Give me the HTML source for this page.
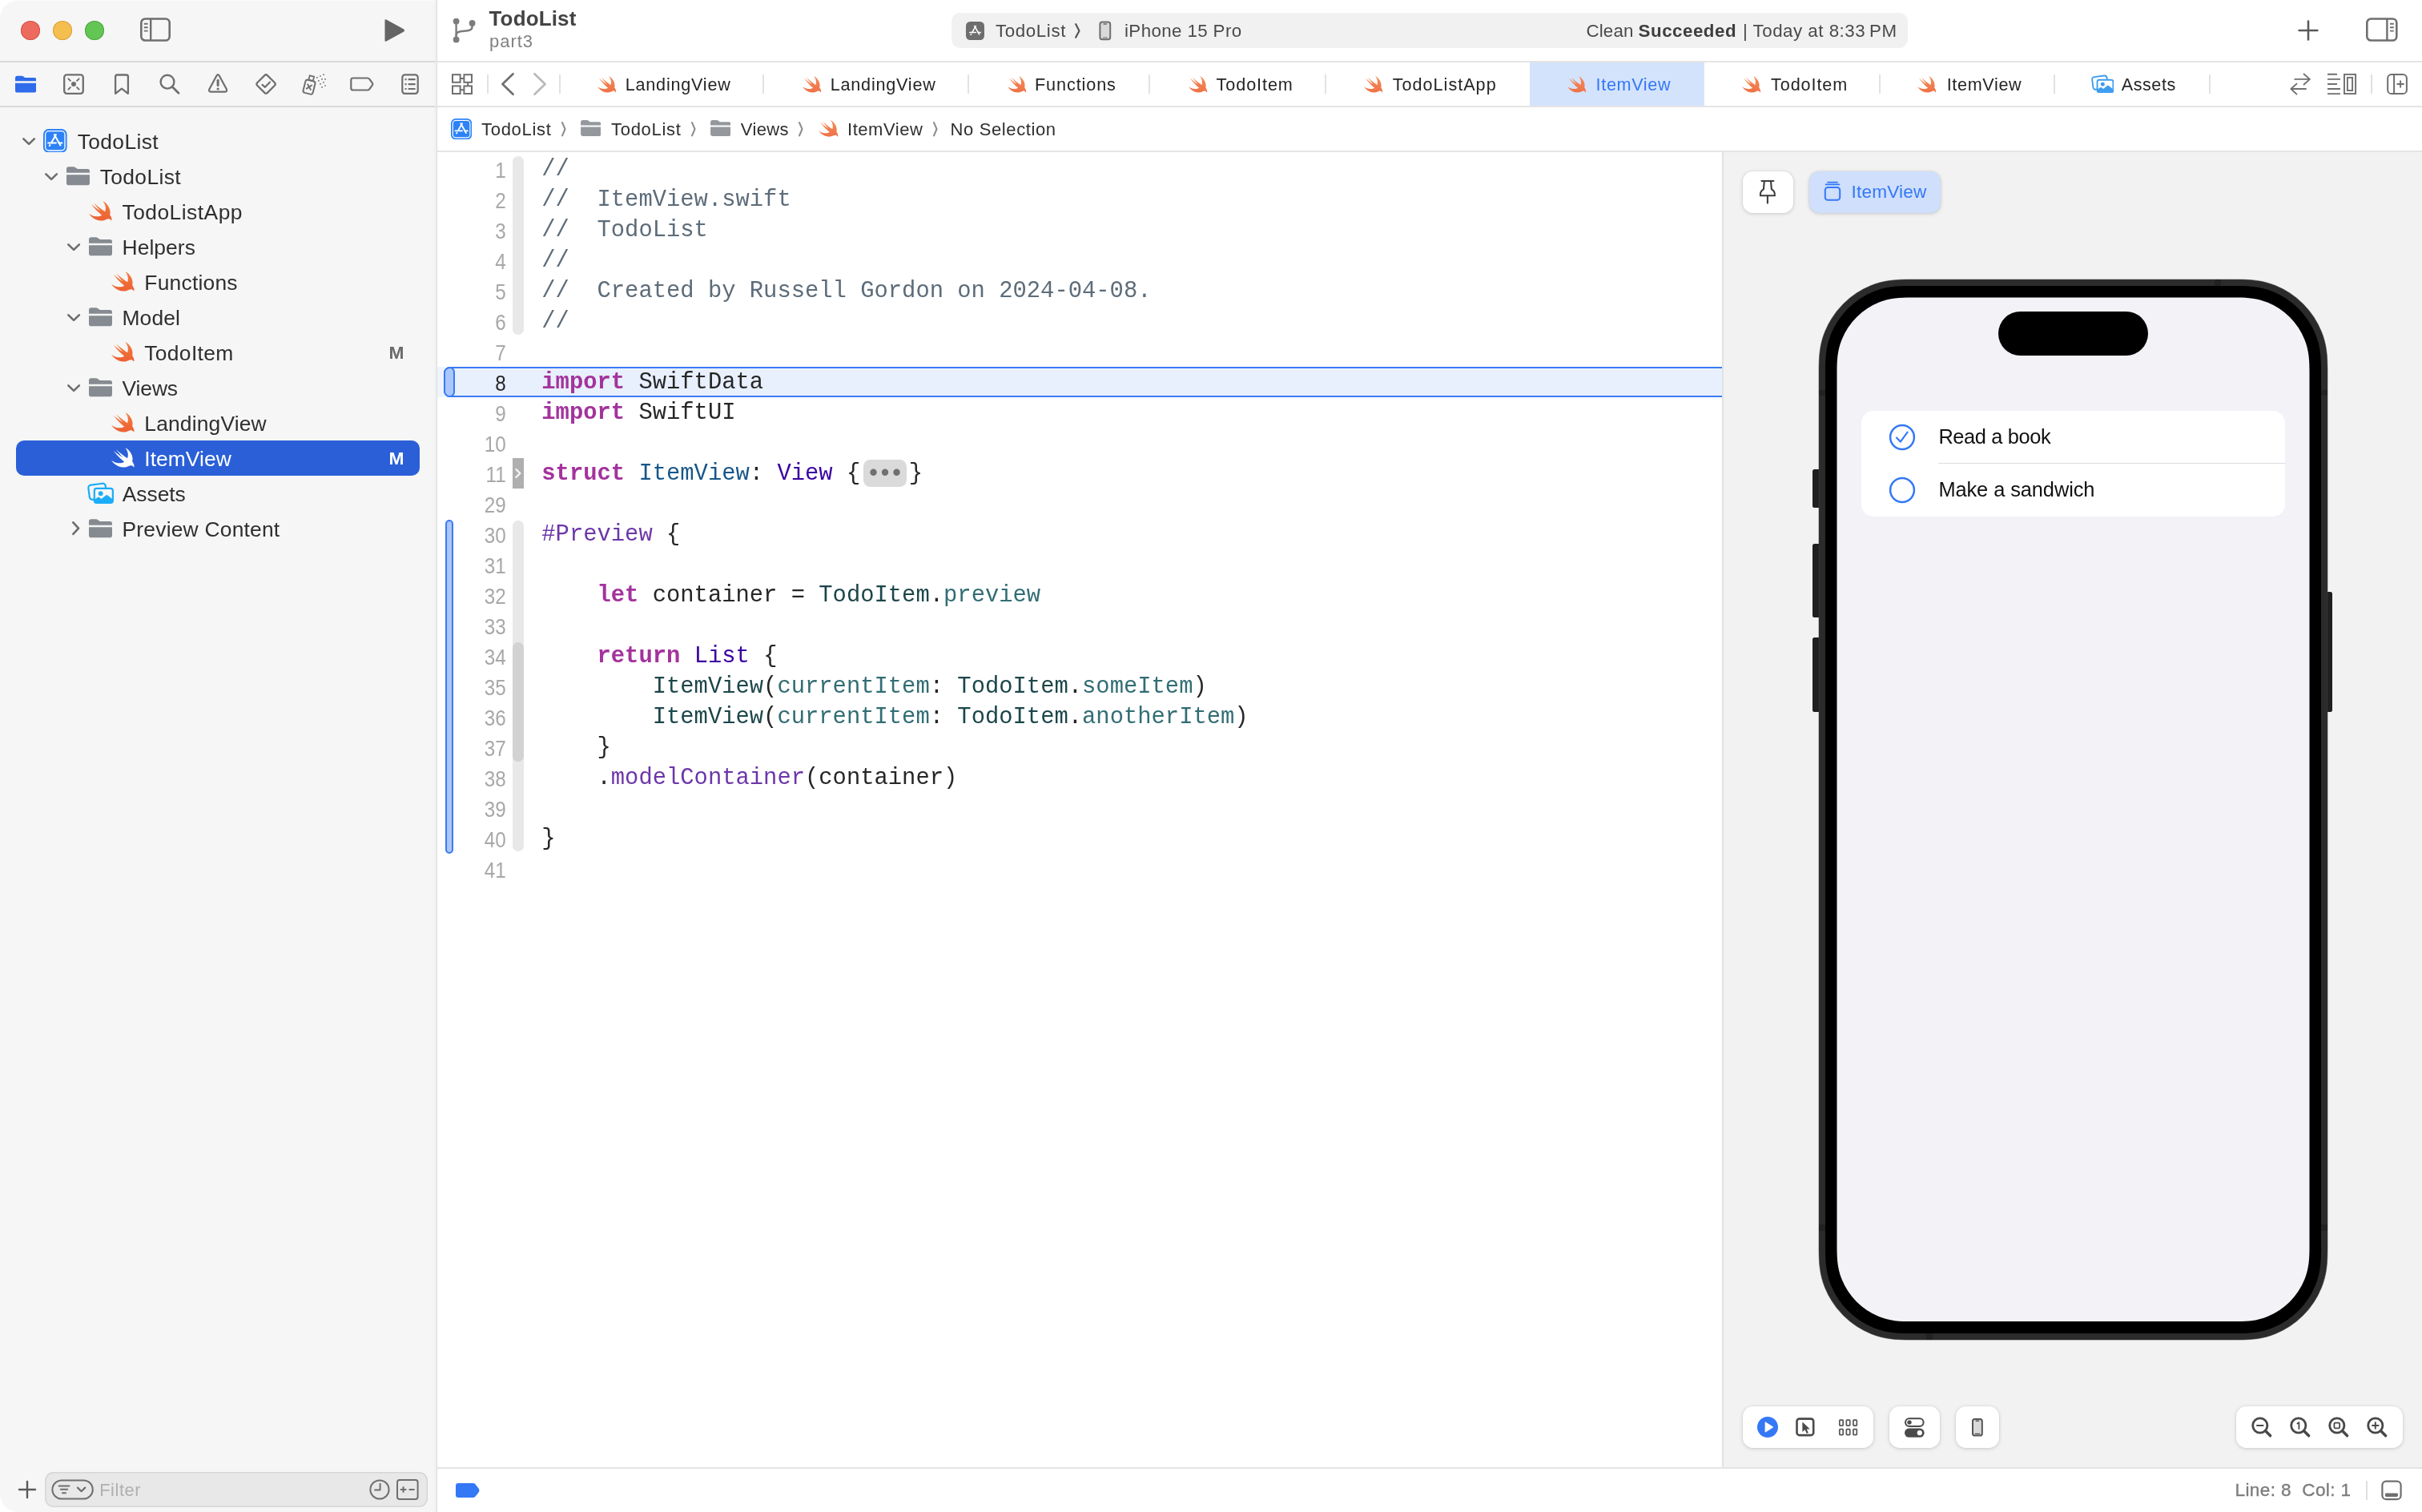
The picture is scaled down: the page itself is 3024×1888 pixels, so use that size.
<!DOCTYPE html>
<html lang="en"><head><meta charset="utf-8"><title>TodoList — ItemView.swift</title>
<style>
html,body{margin:0;padding:0;background:#fff;}
body{width:3024px;height:1888px;position:relative;overflow:hidden;font-family:"Liberation Sans",sans-serif;color:#262626;}
.t{position:absolute;white-space:pre;}
.b{position:absolute;}
svg{display:block;}
.code{position:absolute;left:676.3px;white-space:pre;font-family:"Liberation Mono",monospace;font-size:28.83px;height:38px;line-height:38px;color:#262626;}
.ln{margin-top:-0.5px;position:absolute;white-space:pre;font-size:26.8px;height:38px;line-height:38px;color:#a8a8a8;width:91.8px;left:540px;text-align:right;transform:scaleX(0.905);transform-origin:right center;}
.dots{display:inline-block;vertical-align:top;width:53.6px;height:34px;line-height:36px;margin:0.5px 3px 0 4px;background:#dadada;border-radius:8.5px;color:#707070;font-size:31px;letter-spacing:-4.2px;text-align:center;text-indent:-4.2px;font-family:"Liberation Mono",monospace;overflow:hidden;}
.k{color:#a3339c;font-weight:bold;}
.c{color:#5d6c79;}
.td{color:#17568a;}
.ty{color:#3900a0;}
.pt{color:#1c464a;}
.pp{color:#326d74;}
.fn{color:#6c36a9;}
</style></head><body>
<div id="root" style="position:absolute;left:0;top:0;width:3024px;height:1888px;will-change:transform;">

<div class="b" style="left:0px;top:0px;width:545px;height:1888px;background:#f6f6f6;border-radius:23px 0 0 23px;box-shadow:inset 0 1px 0 #fbfbfb;"></div>
<div class="b" style="left:541px;top:0px;width:4px;height:1888px;background:linear-gradient(90deg,rgba(0,0,0,0),rgba(0,0,0,0.035));"></div>
<div class="b" style="left:545px;top:0px;width:1px;height:1888px;background:#dedede;"></div>
<div class="b" style="left:0px;top:76px;width:544px;height:2px;background:#d9d9d9;"></div>
<div class="b" style="left:0px;top:132px;width:544px;height:2px;background:#d9d9d9;"></div>
<div class="b" style="left:26px;top:26px;width:24px;height:24px;background:#ed6a5f;border-radius:50%;box-shadow:inset 0 0 0 1px #d5544a;"></div>
<div class="b" style="left:66px;top:26px;width:24px;height:24px;background:#f5bf4f;border-radius:50%;box-shadow:inset 0 0 0 1px #d8a03a;"></div>
<div class="b" style="left:106px;top:26px;width:24px;height:24px;background:#62c554;border-radius:50%;box-shadow:inset 0 0 0 1px #4fa73f;"></div>
<svg style="position:absolute;left:174px;top:21px;" width="40" height="32" viewBox="0 0 40 32"><rect x="2.3" y="2.5" width="35.4" height="27" rx="5" fill="none" stroke="#6f6f6f" stroke-width="2.6"/><path d="M14.2 2.5V29.5" stroke="#6f6f6f" stroke-width="2.4"/><path d="M5.8 8.8H10.6M5.8 13.2H10.6M5.8 17.6H10.6" stroke="#6f6f6f" stroke-width="1.9"/></svg>
<svg style="position:absolute;left:477px;top:22px;" width="32" height="32" viewBox="0 0 32 32"><path d="M3.5 3.6Q3.5 1.6 5.4 2.6L27.3 14.6Q29 16 27.3 17.4L5.4 29.4Q3.5 30.4 3.5 28.4Z" fill="#656565"/></svg>
<svg style="position:absolute;left:18.8px;top:93.7px;" width="26.4" height="22.2" viewBox="0 0 29 23"><path d="M0 7.4V2.8Q0 0 2.8 0H8.6Q10.2 0 11.4 1L12.6 2Q13.4 2.6 14.6 2.6H26.2Q29 2.6 29 5.4V7.4Z" fill="#2f6bea"/><path d="M0 9.9H29V20.2Q29 23 26.2 23H2.8Q0 23 0 20.2Z" fill="#2f6bea"/></svg>
<svg style="position:absolute;left:78px;top:91px;" width="28" height="28" viewBox="0 0 28 28"><rect x="2.2" y="2.4" width="23.6" height="23.4" rx="3.2" fill="none" stroke="#6f6f6f" stroke-width="2.3"/><circle cx="14" cy="14" r="3" fill="#6f6f6f"/><path d="M7.4 7.4L9.9 9.9M20.6 7.4L18.1 9.9M7.4 20.6L9.9 18.1M20.6 20.6L18.1 18.1" stroke="#6f6f6f" stroke-width="2" stroke-linecap="round"/></svg>
<svg style="position:absolute;left:141px;top:91px;" width="22" height="29" viewBox="0 0 22 29"><path d="M3.1 4.6Q3.1 2.5 5.2 2.5H16.8Q18.9 2.5 18.9 4.6V25.8L11 19.6L3.1 25.8Z" fill="none" stroke="#6f6f6f" stroke-width="2.3" stroke-linejoin="round"/></svg>
<svg style="position:absolute;left:198px;top:91px;" width="28" height="28" viewBox="0 0 28 28"><circle cx="11" cy="11.2" r="8.4" fill="none" stroke="#6f6f6f" stroke-width="2.4"/><path d="M17.2 17.4L25 25.2" stroke="#6f6f6f" stroke-width="2.8" stroke-linecap="round"/></svg>
<svg style="position:absolute;left:258px;top:90px;" width="28" height="28" viewBox="0 0 28 28"><path d="M12.6 4.3Q14.1 2 15.6 4.3L24.8 21.2Q26 24.5 23 24.7H5.2Q2.2 24.5 3.4 21.2Z" fill="none" stroke="#6f6f6f" stroke-width="2.2" stroke-linejoin="round"/><path d="M14.1 10.2V16.6" stroke="#6f6f6f" stroke-width="3" stroke-linecap="round"/><circle cx="14.1" cy="21" r="1.6" fill="#6f6f6f"/></svg>
<svg style="position:absolute;left:317px;top:90px;" width="30" height="30" viewBox="0 0 30 30"><path d="M13.4 4.1Q15.1 2.4 16.8 4.1L26 13.3Q27.7 15 26 16.7L16.8 25.9Q15.1 27.6 13.4 25.9L4.2 16.7Q2.5 15 4.2 13.3Z" fill="none" stroke="#6f6f6f" stroke-width="2.2"/><path d="M10.5 15.8L14 18.8L20 12.6" fill="none" stroke="#6f6f6f" stroke-width="2.2" stroke-linecap="round" stroke-linejoin="round"/></svg>
<svg style="position:absolute;left:376px;top:90px;" width="33" height="30" viewBox="0 0 33 30"><g transform="rotate(14 11 18)"><rect x="4" y="10.6" width="12.4" height="16.6" rx="2.6" fill="none" stroke="#6f6f6f" stroke-width="2"/><rect x="7.4" y="4.8" width="5.6" height="5.6" fill="none" stroke="#6f6f6f" stroke-width="1.8"/><path d="M7.6 16L12.8 21.6M12.8 16L7.6 21.6" stroke="#6f6f6f" stroke-width="1.9" stroke-linecap="round"/></g><g fill="#6f6f6f"><rect x="27.15" y="2.25" width="1.7" height="1.7" rx="0.4"/><rect x="23.15" y="4.15" width="1.7" height="1.7" rx="0.4"/><rect x="19.05" y="6.05" width="1.7" height="1.7" rx="0.4"/><rect x="29.15" y="7.95" width="1.7" height="1.7" rx="0.4"/><rect x="25.15" y="7.95" width="1.7" height="1.7" rx="0.4"/><rect x="21.05" y="10.05" width="1.7" height="1.7" rx="0.4"/><rect x="27.15" y="12.05" width="1.7" height="1.7" rx="0.4"/><rect x="23.15" y="13.95" width="1.7" height="1.7" rx="0.4"/><rect x="29.15" y="16.15" width="1.7" height="1.7" rx="0.4"/><rect x="25.15" y="18.05" width="1.7" height="1.7" rx="0.4"/></g></svg>
<svg style="position:absolute;left:436px;top:94px;" width="32" height="22" viewBox="0 0 32 22"><path d="M4.8 3.5H22.6Q24.4 3.5 25.4 4.9L29 9.8Q29.8 11 29 12.2L25.4 17.1Q24.4 18.5 22.6 18.5H4.8Q2.3 18.5 2.3 16V6Q2.3 3.5 4.8 3.5Z" fill="none" stroke="#6f6f6f" stroke-width="2.2" stroke-linejoin="round"/></svg>
<svg style="position:absolute;left:500px;top:91px;" width="24" height="28" viewBox="0 0 24 28"><rect x="2.3" y="2.4" width="19.4" height="23.4" rx="3.2" fill="none" stroke="#6f6f6f" stroke-width="2.2"/><path d="M9.6 8.2H18.6M9.6 14.1H18.6M9.6 20H18.6" stroke="#6f6f6f" stroke-width="2.2"/><path d="M5.6 8.2H7.6M5.6 14.1H7.6M5.6 20H7.6" stroke="#6f6f6f" stroke-width="2.2"/></svg>
<div class="b" style="left:20px;top:550.0px;width:504px;height:44px;background:#2a5fd8;border-radius:10px;"></div>
<svg style="position:absolute;left:25.9px;top:170.0px;" width="20.2" height="13.5" viewBox="0 0 20.2 13.5"><path d="M3.35 3.35L10.1 9.85L16.849999999999998 3.35" fill="none" stroke="#6e6e6e" stroke-width="2.7" stroke-linecap="round" stroke-linejoin="round"/></svg>
<svg style="position:absolute;left:54.4px;top:160.9px;" width="29.6" height="29.6" viewBox="0 0 29 29"><rect x="0" y="0" width="29" height="29" rx="6.5" fill="#2d82f7"/><rect x="2.55" y="2.55" width="23.9" height="23.9" rx="4.3" fill="none" stroke="#fff" stroke-width="1.3"/><g fill="none" stroke="#fff" stroke-width="2" stroke-linecap="round"><path d="M15.5 7.0L9.9 16.8"/><path d="M13.6 7.0L21.0 20.0"/><path d="M6.0 17.1H15.6"/><path d="M19 17.1H23"/><path d="M8.3 19.6L7.7 20.6"/></g></svg>
<div class="t" style="left:96.7px;top:158.55px;height:37px;line-height:37px;font-size:26.4px;color:#2f2f2f;letter-spacing:0.37px;">TodoList</div>
<svg style="position:absolute;left:54.0px;top:214.0px;" width="20.2" height="13.5" viewBox="0 0 20.2 13.5"><path d="M3.35 3.35L10.1 9.85L16.849999999999998 3.35" fill="none" stroke="#6e6e6e" stroke-width="2.7" stroke-linecap="round" stroke-linejoin="round"/></svg>
<svg style="position:absolute;left:83.10000000000001px;top:208.3px;" width="29" height="23.6" viewBox="0 0 29 23"><path d="M0 7.4V2.8Q0 0 2.8 0H8.6Q10.2 0 11.4 1L12.6 2Q13.4 2.6 14.6 2.6H26.2Q29 2.6 29 5.4V7.4Z" fill="#868b91"/><path d="M0 9.9H29V20.2Q29 23 26.2 23H2.8Q0 23 0 20.2Z" fill="#868b91"/></svg>
<div class="t" style="left:124.7px;top:202.55px;height:37px;line-height:37px;font-size:26.4px;color:#2f2f2f;letter-spacing:0.37px;">TodoList</div>
<svg preserveAspectRatio="none" style="position:absolute;left:111.2px;top:251.2px;overflow:visible;" width="28.5" height="24.6" viewBox="2.41 3.41 18.12 16.21"><defs><linearGradient id="sg1" x1="0" y1="0" x2="0" y2="1"><stop offset="0" stop-color="#f37e3c"/><stop offset="1" stop-color="#ed6034"/></linearGradient></defs><path d="M13.543 3.41c4.114 2.47 6.545 7.162 5.549 11.131-.024.093-.05.181-.076.272l.002.001c2.062 2.538 1.5 5.258 1.236 4.745-1.072-2.086-3.066-1.568-4.088-1.043a6.803 6.803 0 0 1-.281.158l-.02.012-.002.002c-2.115 1.123-4.957 1.205-7.812-.022a12.568 12.568 0 0 1-5.64-4.838c.649.48 1.35.902 2.097 1.252 3.019 1.414 6.051 1.311 8.197-.002C9.651 12.73 7.101 9.67 5.146 7.191a10.628 10.628 0 0 1-1.005-1.384c2.34 2.142 6.038 4.83 7.365 5.576C8.69 8.408 6.208 4.743 6.324 4.86c4.436 4.47 8.528 6.996 8.528 6.996.154.085.27.154.36.213.085-.215.16-.437.224-.668.708-2.588-.09-5.548-1.893-7.992z" fill="url(#sg1)"/></svg>
<div class="t" style="left:152.5px;top:246.55px;height:37px;line-height:37px;font-size:26.4px;color:#2f2f2f;letter-spacing:0.47px;">TodoListApp</div>
<svg style="position:absolute;left:81.8px;top:302.0px;" width="20.2" height="13.5" viewBox="0 0 20.2 13.5"><path d="M3.35 3.35L10.1 9.85L16.849999999999998 3.35" fill="none" stroke="#6e6e6e" stroke-width="2.7" stroke-linecap="round" stroke-linejoin="round"/></svg>
<svg style="position:absolute;left:110.9px;top:296.3px;" width="29" height="23.6" viewBox="0 0 29 23"><path d="M0 7.4V2.8Q0 0 2.8 0H8.6Q10.2 0 11.4 1L12.6 2Q13.4 2.6 14.6 2.6H26.2Q29 2.6 29 5.4V7.4Z" fill="#868b91"/><path d="M0 9.9H29V20.2Q29 23 26.2 23H2.8Q0 23 0 20.2Z" fill="#868b91"/></svg>
<div class="t" style="left:152.5px;top:290.55px;height:37px;line-height:37px;font-size:26.4px;color:#2f2f2f;letter-spacing:0.08px;">Helpers</div>
<svg preserveAspectRatio="none" style="position:absolute;left:139.0px;top:339.2px;overflow:visible;" width="28.5" height="24.6" viewBox="2.41 3.41 18.12 16.21"><defs><linearGradient id="sg2" x1="0" y1="0" x2="0" y2="1"><stop offset="0" stop-color="#f37e3c"/><stop offset="1" stop-color="#ed6034"/></linearGradient></defs><path d="M13.543 3.41c4.114 2.47 6.545 7.162 5.549 11.131-.024.093-.05.181-.076.272l.002.001c2.062 2.538 1.5 5.258 1.236 4.745-1.072-2.086-3.066-1.568-4.088-1.043a6.803 6.803 0 0 1-.281.158l-.02.012-.002.002c-2.115 1.123-4.957 1.205-7.812-.022a12.568 12.568 0 0 1-5.64-4.838c.649.48 1.35.902 2.097 1.252 3.019 1.414 6.051 1.311 8.197-.002C9.651 12.73 7.101 9.67 5.146 7.191a10.628 10.628 0 0 1-1.005-1.384c2.34 2.142 6.038 4.83 7.365 5.576C8.69 8.408 6.208 4.743 6.324 4.86c4.436 4.47 8.528 6.996 8.528 6.996.154.085.27.154.36.213.085-.215.16-.437.224-.668.708-2.588-.09-5.548-1.893-7.992z" fill="url(#sg2)"/></svg>
<div class="t" style="left:180.3px;top:334.55px;height:37px;line-height:37px;font-size:26.4px;color:#2f2f2f;letter-spacing:0.23px;">Functions</div>
<svg style="position:absolute;left:81.8px;top:390.0px;" width="20.2" height="13.5" viewBox="0 0 20.2 13.5"><path d="M3.35 3.35L10.1 9.85L16.849999999999998 3.35" fill="none" stroke="#6e6e6e" stroke-width="2.7" stroke-linecap="round" stroke-linejoin="round"/></svg>
<svg style="position:absolute;left:110.9px;top:384.3px;" width="29" height="23.6" viewBox="0 0 29 23"><path d="M0 7.4V2.8Q0 0 2.8 0H8.6Q10.2 0 11.4 1L12.6 2Q13.4 2.6 14.6 2.6H26.2Q29 2.6 29 5.4V7.4Z" fill="#868b91"/><path d="M0 9.9H29V20.2Q29 23 26.2 23H2.8Q0 23 0 20.2Z" fill="#868b91"/></svg>
<div class="t" style="left:152.5px;top:378.55px;height:37px;line-height:37px;font-size:26.4px;color:#2f2f2f;letter-spacing:0.14px;">Model</div>
<svg preserveAspectRatio="none" style="position:absolute;left:139.0px;top:427.2px;overflow:visible;" width="28.5" height="24.6" viewBox="2.41 3.41 18.12 16.21"><defs><linearGradient id="sg3" x1="0" y1="0" x2="0" y2="1"><stop offset="0" stop-color="#f37e3c"/><stop offset="1" stop-color="#ed6034"/></linearGradient></defs><path d="M13.543 3.41c4.114 2.47 6.545 7.162 5.549 11.131-.024.093-.05.181-.076.272l.002.001c2.062 2.538 1.5 5.258 1.236 4.745-1.072-2.086-3.066-1.568-4.088-1.043a6.803 6.803 0 0 1-.281.158l-.02.012-.002.002c-2.115 1.123-4.957 1.205-7.812-.022a12.568 12.568 0 0 1-5.64-4.838c.649.48 1.35.902 2.097 1.252 3.019 1.414 6.051 1.311 8.197-.002C9.651 12.73 7.101 9.67 5.146 7.191a10.628 10.628 0 0 1-1.005-1.384c2.34 2.142 6.038 4.83 7.365 5.576C8.69 8.408 6.208 4.743 6.324 4.86c4.436 4.47 8.528 6.996 8.528 6.996.154.085.27.154.36.213.085-.215.16-.437.224-.668.708-2.588-.09-5.548-1.893-7.992z" fill="url(#sg3)"/></svg>
<div class="t" style="left:180.3px;top:422.55px;height:37px;line-height:37px;font-size:26.4px;color:#2f2f2f;letter-spacing:0.34px;">TodoItem</div>
<div class="t" style="left:485.4px;top:423.56px;height:32px;line-height:32px;font-size:22.8px;color:#6b6b6b;font-weight:bold;">M</div>
<svg style="position:absolute;left:81.8px;top:478.0px;" width="20.2" height="13.5" viewBox="0 0 20.2 13.5"><path d="M3.35 3.35L10.1 9.85L16.849999999999998 3.35" fill="none" stroke="#6e6e6e" stroke-width="2.7" stroke-linecap="round" stroke-linejoin="round"/></svg>
<svg style="position:absolute;left:110.9px;top:472.3px;" width="29" height="23.6" viewBox="0 0 29 23"><path d="M0 7.4V2.8Q0 0 2.8 0H8.6Q10.2 0 11.4 1L12.6 2Q13.4 2.6 14.6 2.6H26.2Q29 2.6 29 5.4V7.4Z" fill="#868b91"/><path d="M0 9.9H29V20.2Q29 23 26.2 23H2.8Q0 23 0 20.2Z" fill="#868b91"/></svg>
<div class="t" style="left:152.5px;top:466.55px;height:37px;line-height:37px;font-size:26.4px;color:#2f2f2f;letter-spacing:-0.09px;">Views</div>
<svg preserveAspectRatio="none" style="position:absolute;left:139.0px;top:515.2px;overflow:visible;" width="28.5" height="24.6" viewBox="2.41 3.41 18.12 16.21"><defs><linearGradient id="sg4" x1="0" y1="0" x2="0" y2="1"><stop offset="0" stop-color="#f37e3c"/><stop offset="1" stop-color="#ed6034"/></linearGradient></defs><path d="M13.543 3.41c4.114 2.47 6.545 7.162 5.549 11.131-.024.093-.05.181-.076.272l.002.001c2.062 2.538 1.5 5.258 1.236 4.745-1.072-2.086-3.066-1.568-4.088-1.043a6.803 6.803 0 0 1-.281.158l-.02.012-.002.002c-2.115 1.123-4.957 1.205-7.812-.022a12.568 12.568 0 0 1-5.64-4.838c.649.48 1.35.902 2.097 1.252 3.019 1.414 6.051 1.311 8.197-.002C9.651 12.73 7.101 9.67 5.146 7.191a10.628 10.628 0 0 1-1.005-1.384c2.34 2.142 6.038 4.83 7.365 5.576C8.69 8.408 6.208 4.743 6.324 4.86c4.436 4.47 8.528 6.996 8.528 6.996.154.085.27.154.36.213.085-.215.16-.437.224-.668.708-2.588-.09-5.548-1.893-7.992z" fill="url(#sg4)"/></svg>
<div class="t" style="left:180.3px;top:510.55px;height:37px;line-height:37px;font-size:26.4px;color:#2f2f2f;letter-spacing:0.17px;">LandingView</div>
<svg preserveAspectRatio="none" style="position:absolute;left:139.0px;top:559.2px;overflow:visible;" width="28.5" height="24.6" viewBox="2.41 3.41 18.12 16.21"><path d="M13.543 3.41c4.114 2.47 6.545 7.162 5.549 11.131-.024.093-.05.181-.076.272l.002.001c2.062 2.538 1.5 5.258 1.236 4.745-1.072-2.086-3.066-1.568-4.088-1.043a6.803 6.803 0 0 1-.281.158l-.02.012-.002.002c-2.115 1.123-4.957 1.205-7.812-.022a12.568 12.568 0 0 1-5.64-4.838c.649.48 1.35.902 2.097 1.252 3.019 1.414 6.051 1.311 8.197-.002C9.651 12.73 7.101 9.67 5.146 7.191a10.628 10.628 0 0 1-1.005-1.384c2.34 2.142 6.038 4.83 7.365 5.576C8.69 8.408 6.208 4.743 6.324 4.86c4.436 4.47 8.528 6.996 8.528 6.996.154.085.27.154.36.213.085-.215.16-.437.224-.668.708-2.588-.09-5.548-1.893-7.992z" fill="#fff"/></svg>
<div class="t" style="left:180.3px;top:554.55px;height:37px;line-height:37px;font-size:26.4px;color:#fff;letter-spacing:0.05px;">ItemView</div>
<div class="t" style="left:485.4px;top:555.56px;height:32px;line-height:32px;font-size:22.8px;color:#fff;font-weight:bold;">M</div>
<svg style="position:absolute;left:109.2px;top:602.0px;" width="33.3" height="27.2" viewBox="0 0 33.3 27.2"><g transform="rotate(-7.5 12.7 11.7)"><rect x="2" y="2.6" width="21.6" height="18.4" rx="3.6" fill="none" stroke="#1badf8" stroke-width="2.2"/></g><rect x="8.8" y="7.8" width="23.1" height="18.1" rx="2.8" fill="#f6f6f6" stroke="#1badf8" stroke-width="2.2"/><circle cx="16.7" cy="14.2" r="2.9" fill="#1badf8"/><path d="M9.4 21.6L13 18.9Q14 18.2 15 18.9L17.5 20.9L23.2 16.4Q24.3 15.6 25.4 16.4L31.2 21V24Q31.2 25.4 29.8 25.4H10.8Q9.4 25.4 9.4 24Z" fill="#1badf8"/></svg>
<div class="t" style="left:152.8px;top:598.55px;height:37px;line-height:37px;font-size:26.4px;color:#2f2f2f;letter-spacing:-0.04px;">Assets</div>
<svg style="position:absolute;left:87.7px;top:649.0px;" width="13.7" height="21.2" viewBox="0 0 13.7 21.2"><path d="M3.35 3.35L10.049999999999999 10.6L3.35 17.849999999999998" fill="none" stroke="#6e6e6e" stroke-width="2.7" stroke-linecap="round" stroke-linejoin="round"/></svg>
<svg style="position:absolute;left:110.9px;top:648.3px;" width="29" height="23.6" viewBox="0 0 29 23"><path d="M0 7.4V2.8Q0 0 2.8 0H8.6Q10.2 0 11.4 1L12.6 2Q13.4 2.6 14.6 2.6H26.2Q29 2.6 29 5.4V7.4Z" fill="#868b91"/><path d="M0 9.9H29V20.2Q29 23 26.2 23H2.8Q0 23 0 20.2Z" fill="#868b91"/></svg>
<div class="t" style="left:152.5px;top:642.55px;height:37px;line-height:37px;font-size:26.4px;color:#2f2f2f;letter-spacing:0.22px;">Preview Content</div>
<svg style="position:absolute;left:22px;top:1848px;" width="24" height="24" viewBox="0 0 24 24"><path d="M12 2V22M2 12H22" stroke="#5a5a5a" stroke-width="2.4" stroke-linecap="round"/></svg>
<div class="b" style="left:56px;top:1838px;width:478px;height:44px;background:#e8e8e8;border-radius:11px;box-shadow:inset 0 0 0 1.5px #d6d6d6;"></div>
<svg style="position:absolute;left:64px;top:1847px;" width="54" height="26" viewBox="0 0 54 26"><rect x="1.4" y="1.4" width="50.4" height="23.2" rx="11.6" fill="none" stroke="#6f6f6f" stroke-width="2"/><path d="M9.6 8.4H22.4M11.8 12.8H20.2M14 17.2H18" stroke="#6f6f6f" stroke-width="2" stroke-linecap="round"/><path d="M33 10.6L37.6 15.2L42.2 10.6" fill="none" stroke="#6f6f6f" stroke-width="2.2" stroke-linecap="round" stroke-linejoin="round"/></svg>
<div class="t" style="left:124.2px;top:1844.80px;height:31px;line-height:31px;font-size:21.8px;color:#b0b0b0;letter-spacing:0.59px;">Filter</div>
<svg style="position:absolute;left:460px;top:1846px;" width="28" height="28" viewBox="0 0 28 28"><circle cx="14" cy="14" r="11.6" fill="none" stroke="#6f6f6f" stroke-width="2"/><path d="M14.6 6.8V14.6H8" fill="none" stroke="#6f6f6f" stroke-width="2" stroke-linecap="round" stroke-linejoin="round"/></svg>
<svg style="position:absolute;left:494px;top:1846px;" width="30" height="28" viewBox="0 0 30 28"><rect x="2" y="2" width="25.6" height="24" rx="3" fill="none" stroke="#6f6f6f" stroke-width="2"/><path d="M5.8 14H13.4M9.6 10.2V17.8M16.6 14H23.6" stroke="#6f6f6f" stroke-width="2.1"/></svg>
<div class="b" style="left:546px;top:76px;width:2478px;height:2px;background:#e4e4e4;"></div>
<svg style="position:absolute;left:563px;top:20px;" width="34" height="36" viewBox="0 0 34 36"><g fill="none" stroke="#7c7c7c" stroke-width="2.4" stroke-linecap="round"><path d="M6.6 9V27"/><path d="M26.6 11.6V13Q26.6 17.6 21 18.2L12 19.2Q6.6 19.8 6.6 24"/></g><circle cx="6.6" cy="6.6" r="3.9" fill="#7c7c7c"/><circle cx="26.6" cy="9" r="3.9" fill="#7c7c7c"/><circle cx="6.6" cy="29.4" r="3.9" fill="#7c7c7c"/></svg>
<div class="t" style="left:610.5px;top:4.91px;height:36px;line-height:36px;font-size:26px;color:#444;font-weight:bold;letter-spacing:0.15px;">TodoList</div>
<div class="t" style="left:611px;top:36.48px;height:31px;line-height:31px;font-size:22px;color:#828282;letter-spacing:0.97px;">part3</div>
<div class="b" style="left:1188px;top:16px;width:1194px;height:44px;background:#f1f1f1;border-radius:11px;"></div>
<svg style="position:absolute;left:1206px;top:26.6px;" width="23" height="23" viewBox="0 0 29 29"><rect x="0" y="0" width="29" height="29" rx="6.5" fill="#6e6e6e"/><g fill="none" stroke="#fff" stroke-width="2" stroke-linecap="round"><path d="M15.5 7.0L9.9 16.8"/><path d="M13.6 7.0L21.0 20.0"/><path d="M6.0 17.1H15.6"/><path d="M19 17.1H23"/><path d="M8.3 19.6L7.7 20.6"/></g></svg>
<div class="t" style="left:1243px;top:22.88px;height:31px;line-height:31px;font-size:22.3px;color:#4a4a4a;letter-spacing:0.62px;">TodoList</div>
<svg style="position:absolute;left:1340.2px;top:26.8px;" width="10.6" height="22.8" viewBox="0 0 10.6 22.8"><path d="M3.1 3.1L7.5 11.4L3.1 19.7" fill="none" stroke="#555" stroke-width="2.2" stroke-linecap="round" stroke-linejoin="round"/></svg>
<svg style="position:absolute;left:1371px;top:26px;" width="18" height="25" viewBox="0 0 18 25"><rect x="2.4" y="1.6" width="12.8" height="21.6" rx="2.8" fill="#d9d9d9" stroke="#6e6e6e" stroke-width="2"/><path d="M7 4H10.6" stroke="#6e6e6e" stroke-width="1.4" stroke-linecap="round"/><path d="M6.4 21H11.2" stroke="#6e6e6e" stroke-width="1.1" stroke-linecap="round"/></svg>
<div class="t" style="left:1404px;top:22.88px;height:31px;line-height:31px;font-size:22.3px;color:#4a4a4a;letter-spacing:0.40px;">iPhone 15 Pro</div>
<div class="t" style="left:1980.5px;top:22.88px;height:31px;line-height:31px;font-size:22.3px;color:#4a4a4a;letter-spacing:0.15px;">Clean</div>
<div class="t" style="left:2045.6px;top:22.88px;height:31px;line-height:31px;font-size:22.3px;color:#3e3e3e;font-weight:bold;letter-spacing:0.53px;">Succeeded</div>
<div class="t" style="left:2176px;top:22.88px;height:31px;line-height:31px;font-size:22.3px;color:#4a4a4a;letter-spacing:0.51px;">| Today at 8:33 PM</div>
<svg style="position:absolute;left:2868px;top:24px;" width="28" height="28" viewBox="0 0 28 28"><path d="M14 2.6V25.4M2.6 14H25.4" stroke="#5a5a5a" stroke-width="2.6" stroke-linecap="round"/></svg>
<svg style="position:absolute;left:2953px;top:21px;" width="42" height="32" viewBox="0 0 42 32"><rect x="2.3" y="2.5" width="37" height="27" rx="5" fill="none" stroke="#6f6f6f" stroke-width="2.6"/><path d="M27.4 2.5V29.5" stroke="#6f6f6f" stroke-width="2.4"/><path d="M31 8.8H35.8M31 13.2H35.8M31 17.6H35.8" stroke="#6f6f6f" stroke-width="1.9"/></svg>
<div class="b" style="left:546px;top:132px;width:2478px;height:2px;background:#e4e4e4;"></div>
<svg style="position:absolute;left:563px;top:91px;" width="28" height="28" viewBox="0 0 28 28"><g fill="none" stroke="#6f6f6f" stroke-width="2"><rect x="2" y="2.2" width="9.6" height="9.6"/><rect x="16.4" y="2.2" width="9.6" height="9.6"/><rect x="2" y="16.4" width="9.6" height="9.6"/><rect x="16.4" y="16.4" width="9.6" height="9.6"/><path d="M11.6 7H16.4M21.2 11.8V16.4M11.6 21.2H16.4"/></g></svg>
<div class="b" style="left:608px;top:93px;width:2px;height:24px;background:#e2e2e2;"></div>
<svg style="position:absolute;left:623px;top:89px;" width="22" height="32" viewBox="0 0 22 32"><path d="M17.6 3.2L4.4 16L17.6 28.8" fill="none" stroke="#6f6f6f" stroke-width="2.6" stroke-linecap="round" stroke-linejoin="round"/></svg>
<svg style="position:absolute;left:663px;top:89px;" width="22" height="32" viewBox="0 0 22 32"><path d="M4.4 3.2L17.6 16L4.4 28.8" fill="none" stroke="#b9b9b9" stroke-width="2.6" stroke-linecap="round" stroke-linejoin="round"/></svg>
<div class="b" style="left:698px;top:93px;width:2px;height:24px;background:#e2e2e2;"></div>
<div class="b" style="left:1910px;top:78px;width:218px;height:54px;background:#d4e3fc;"></div>
<svg preserveAspectRatio="none" style="position:absolute;left:746px;top:94.9px;overflow:visible;" width="23.2" height="20.6" viewBox="2.41 3.41 18.12 16.21"><defs><linearGradient id="sg6" x1="0" y1="0" x2="0" y2="1"><stop offset="0" stop-color="#f58b55"/><stop offset="1" stop-color="#ef7248"/></linearGradient></defs><path d="M13.543 3.41c4.114 2.47 6.545 7.162 5.549 11.131-.024.093-.05.181-.076.272l.002.001c2.062 2.538 1.5 5.258 1.236 4.745-1.072-2.086-3.066-1.568-4.088-1.043a6.803 6.803 0 0 1-.281.158l-.02.012-.002.002c-2.115 1.123-4.957 1.205-7.812-.022a12.568 12.568 0 0 1-5.64-4.838c.649.48 1.35.902 2.097 1.252 3.019 1.414 6.051 1.311 8.197-.002C9.651 12.73 7.101 9.67 5.146 7.191a10.628 10.628 0 0 1-1.005-1.384c2.34 2.142 6.038 4.83 7.365 5.576C8.69 8.408 6.208 4.743 6.324 4.86c4.436 4.47 8.528 6.996 8.528 6.996.154.085.27.154.36.213.085-.215.16-.437.224-.668.708-2.588-.09-5.548-1.893-7.992z" fill="url(#sg6)"/></svg>
<div class="t" style="left:780.7px;top:90.53px;height:30px;line-height:30px;font-size:21.6px;color:#252525;letter-spacing:0.79px;">LandingView</div>
<svg preserveAspectRatio="none" style="position:absolute;left:1001.6px;top:94.9px;overflow:visible;" width="23.2" height="20.6" viewBox="2.41 3.41 18.12 16.21"><defs><linearGradient id="sg7" x1="0" y1="0" x2="0" y2="1"><stop offset="0" stop-color="#f58b55"/><stop offset="1" stop-color="#ef7248"/></linearGradient></defs><path d="M13.543 3.41c4.114 2.47 6.545 7.162 5.549 11.131-.024.093-.05.181-.076.272l.002.001c2.062 2.538 1.5 5.258 1.236 4.745-1.072-2.086-3.066-1.568-4.088-1.043a6.803 6.803 0 0 1-.281.158l-.02.012-.002.002c-2.115 1.123-4.957 1.205-7.812-.022a12.568 12.568 0 0 1-5.64-4.838c.649.48 1.35.902 2.097 1.252 3.019 1.414 6.051 1.311 8.197-.002C9.651 12.73 7.101 9.67 5.146 7.191a10.628 10.628 0 0 1-1.005-1.384c2.34 2.142 6.038 4.83 7.365 5.576C8.69 8.408 6.208 4.743 6.324 4.86c4.436 4.47 8.528 6.996 8.528 6.996.154.085.27.154.36.213.085-.215.16-.437.224-.668.708-2.588-.09-5.548-1.893-7.992z" fill="url(#sg7)"/></svg>
<div class="t" style="left:1036.7px;top:90.53px;height:30px;line-height:30px;font-size:21.6px;color:#252525;letter-spacing:0.79px;">LandingView</div>
<svg preserveAspectRatio="none" style="position:absolute;left:1257.8px;top:94.9px;overflow:visible;" width="23.2" height="20.6" viewBox="2.41 3.41 18.12 16.21"><defs><linearGradient id="sg8" x1="0" y1="0" x2="0" y2="1"><stop offset="0" stop-color="#f58b55"/><stop offset="1" stop-color="#ef7248"/></linearGradient></defs><path d="M13.543 3.41c4.114 2.47 6.545 7.162 5.549 11.131-.024.093-.05.181-.076.272l.002.001c2.062 2.538 1.5 5.258 1.236 4.745-1.072-2.086-3.066-1.568-4.088-1.043a6.803 6.803 0 0 1-.281.158l-.02.012-.002.002c-2.115 1.123-4.957 1.205-7.812-.022a12.568 12.568 0 0 1-5.64-4.838c.649.48 1.35.902 2.097 1.252 3.019 1.414 6.051 1.311 8.197-.002C9.651 12.73 7.101 9.67 5.146 7.191a10.628 10.628 0 0 1-1.005-1.384c2.34 2.142 6.038 4.83 7.365 5.576C8.69 8.408 6.208 4.743 6.324 4.86c4.436 4.47 8.528 6.996 8.528 6.996.154.085.27.154.36.213.085-.215.16-.437.224-.668.708-2.588-.09-5.548-1.893-7.992z" fill="url(#sg8)"/></svg>
<div class="t" style="left:1292px;top:90.53px;height:30px;line-height:30px;font-size:21.6px;color:#252525;letter-spacing:0.91px;">Functions</div>
<svg preserveAspectRatio="none" style="position:absolute;left:1483.5px;top:94.9px;overflow:visible;" width="23.2" height="20.6" viewBox="2.41 3.41 18.12 16.21"><defs><linearGradient id="sg9" x1="0" y1="0" x2="0" y2="1"><stop offset="0" stop-color="#f58b55"/><stop offset="1" stop-color="#ef7248"/></linearGradient></defs><path d="M13.543 3.41c4.114 2.47 6.545 7.162 5.549 11.131-.024.093-.05.181-.076.272l.002.001c2.062 2.538 1.5 5.258 1.236 4.745-1.072-2.086-3.066-1.568-4.088-1.043a6.803 6.803 0 0 1-.281.158l-.02.012-.002.002c-2.115 1.123-4.957 1.205-7.812-.022a12.568 12.568 0 0 1-5.64-4.838c.649.48 1.35.902 2.097 1.252 3.019 1.414 6.051 1.311 8.197-.002C9.651 12.73 7.101 9.67 5.146 7.191a10.628 10.628 0 0 1-1.005-1.384c2.34 2.142 6.038 4.83 7.365 5.576C8.69 8.408 6.208 4.743 6.324 4.86c4.436 4.47 8.528 6.996 8.528 6.996.154.085.27.154.36.213.085-.215.16-.437.224-.668.708-2.588-.09-5.548-1.893-7.992z" fill="url(#sg9)"/></svg>
<div class="t" style="left:1518.6px;top:90.53px;height:30px;line-height:30px;font-size:21.6px;color:#252525;letter-spacing:0.92px;">TodoItem</div>
<svg preserveAspectRatio="none" style="position:absolute;left:1703.3px;top:94.9px;overflow:visible;" width="23.2" height="20.6" viewBox="2.41 3.41 18.12 16.21"><defs><linearGradient id="sg10" x1="0" y1="0" x2="0" y2="1"><stop offset="0" stop-color="#f58b55"/><stop offset="1" stop-color="#ef7248"/></linearGradient></defs><path d="M13.543 3.41c4.114 2.47 6.545 7.162 5.549 11.131-.024.093-.05.181-.076.272l.002.001c2.062 2.538 1.5 5.258 1.236 4.745-1.072-2.086-3.066-1.568-4.088-1.043a6.803 6.803 0 0 1-.281.158l-.02.012-.002.002c-2.115 1.123-4.957 1.205-7.812-.022a12.568 12.568 0 0 1-5.64-4.838c.649.48 1.35.902 2.097 1.252 3.019 1.414 6.051 1.311 8.197-.002C9.651 12.73 7.101 9.67 5.146 7.191a10.628 10.628 0 0 1-1.005-1.384c2.34 2.142 6.038 4.83 7.365 5.576C8.69 8.408 6.208 4.743 6.324 4.86c4.436 4.47 8.528 6.996 8.528 6.996.154.085.27.154.36.213.085-.215.16-.437.224-.668.708-2.588-.09-5.548-1.893-7.992z" fill="url(#sg10)"/></svg>
<div class="t" style="left:1738.7px;top:90.53px;height:30px;line-height:30px;font-size:21.6px;color:#252525;letter-spacing:1.01px;">TodoListApp</div>
<svg preserveAspectRatio="none" style="position:absolute;left:1956.9px;top:94.9px;overflow:visible;" width="23.2" height="20.6" viewBox="2.41 3.41 18.12 16.21"><defs><linearGradient id="sg11" x1="0" y1="0" x2="0" y2="1"><stop offset="0" stop-color="#f58b55"/><stop offset="1" stop-color="#ef7248"/></linearGradient></defs><path d="M13.543 3.41c4.114 2.47 6.545 7.162 5.549 11.131-.024.093-.05.181-.076.272l.002.001c2.062 2.538 1.5 5.258 1.236 4.745-1.072-2.086-3.066-1.568-4.088-1.043a6.803 6.803 0 0 1-.281.158l-.02.012-.002.002c-2.115 1.123-4.957 1.205-7.812-.022a12.568 12.568 0 0 1-5.64-4.838c.649.48 1.35.902 2.097 1.252 3.019 1.414 6.051 1.311 8.197-.002C9.651 12.73 7.101 9.67 5.146 7.191a10.628 10.628 0 0 1-1.005-1.384c2.34 2.142 6.038 4.83 7.365 5.576C8.69 8.408 6.208 4.743 6.324 4.86c4.436 4.47 8.528 6.996 8.528 6.996.154.085.27.154.36.213.085-.215.16-.437.224-.668.708-2.588-.09-5.548-1.893-7.992z" fill="url(#sg11)"/></svg>
<div class="t" style="left:1992.6px;top:90.53px;height:30px;line-height:30px;font-size:21.6px;color:#3478f6;letter-spacing:0.65px;">ItemView</div>
<svg preserveAspectRatio="none" style="position:absolute;left:2174.9px;top:94.9px;overflow:visible;" width="23.2" height="20.6" viewBox="2.41 3.41 18.12 16.21"><defs><linearGradient id="sg12" x1="0" y1="0" x2="0" y2="1"><stop offset="0" stop-color="#f58b55"/><stop offset="1" stop-color="#ef7248"/></linearGradient></defs><path d="M13.543 3.41c4.114 2.47 6.545 7.162 5.549 11.131-.024.093-.05.181-.076.272l.002.001c2.062 2.538 1.5 5.258 1.236 4.745-1.072-2.086-3.066-1.568-4.088-1.043a6.803 6.803 0 0 1-.281.158l-.02.012-.002.002c-2.115 1.123-4.957 1.205-7.812-.022a12.568 12.568 0 0 1-5.64-4.838c.649.48 1.35.902 2.097 1.252 3.019 1.414 6.051 1.311 8.197-.002C9.651 12.73 7.101 9.67 5.146 7.191a10.628 10.628 0 0 1-1.005-1.384c2.34 2.142 6.038 4.83 7.365 5.576C8.69 8.408 6.208 4.743 6.324 4.86c4.436 4.47 8.528 6.996 8.528 6.996.154.085.27.154.36.213.085-.215.16-.437.224-.668.708-2.588-.09-5.548-1.893-7.992z" fill="url(#sg12)"/></svg>
<div class="t" style="left:2211px;top:90.53px;height:30px;line-height:30px;font-size:21.6px;color:#252525;letter-spacing:0.92px;">TodoItem</div>
<svg preserveAspectRatio="none" style="position:absolute;left:2394.2px;top:94.9px;overflow:visible;" width="23.2" height="20.6" viewBox="2.41 3.41 18.12 16.21"><defs><linearGradient id="sg13" x1="0" y1="0" x2="0" y2="1"><stop offset="0" stop-color="#f58b55"/><stop offset="1" stop-color="#ef7248"/></linearGradient></defs><path d="M13.543 3.41c4.114 2.47 6.545 7.162 5.549 11.131-.024.093-.05.181-.076.272l.002.001c2.062 2.538 1.5 5.258 1.236 4.745-1.072-2.086-3.066-1.568-4.088-1.043a6.803 6.803 0 0 1-.281.158l-.02.012-.002.002c-2.115 1.123-4.957 1.205-7.812-.022a12.568 12.568 0 0 1-5.64-4.838c.649.48 1.35.902 2.097 1.252 3.019 1.414 6.051 1.311 8.197-.002C9.651 12.73 7.101 9.67 5.146 7.191a10.628 10.628 0 0 1-1.005-1.384c2.34 2.142 6.038 4.83 7.365 5.576C8.69 8.408 6.208 4.743 6.324 4.86c4.436 4.47 8.528 6.996 8.528 6.996.154.085.27.154.36.213.085-.215.16-.437.224-.668.708-2.588-.09-5.548-1.893-7.992z" fill="url(#sg13)"/></svg>
<div class="t" style="left:2430.7px;top:90.53px;height:30px;line-height:30px;font-size:21.6px;color:#252525;letter-spacing:0.65px;">ItemView</div>
<svg style="position:absolute;left:2610.6px;top:92.6px;" width="28.6" height="23.4" viewBox="0 0 33.3 27.2"><g transform="rotate(-7.5 12.7 11.7)"><rect x="2" y="2.6" width="21.6" height="18.4" rx="3.6" fill="none" stroke="#3d9cf0" stroke-width="2.2"/></g><rect x="8.8" y="7.8" width="23.1" height="18.1" rx="2.8" fill="#fff" stroke="#3d9cf0" stroke-width="2.2"/><circle cx="16.7" cy="14.2" r="2.9" fill="#3d9cf0"/><path d="M9.4 21.6L13 18.9Q14 18.2 15 18.9L17.5 20.9L23.2 16.4Q24.3 15.6 25.4 16.4L31.2 21V24Q31.2 25.4 29.8 25.4H10.8Q9.4 25.4 9.4 24Z" fill="#3d9cf0"/></svg>
<div class="t" style="left:2648.7px;top:90.53px;height:30px;line-height:30px;font-size:21.6px;color:#252525;letter-spacing:0.56px;">Assets</div>
<div class="b" style="left:952px;top:93px;width:2px;height:24px;background:#e2e2e2;"></div>
<div class="b" style="left:1208px;top:93px;width:2px;height:24px;background:#e2e2e2;"></div>
<div class="b" style="left:1434px;top:93px;width:2px;height:24px;background:#e2e2e2;"></div>
<div class="b" style="left:1654px;top:93px;width:2px;height:24px;background:#e2e2e2;"></div>
<div class="b" style="left:2346px;top:93px;width:2px;height:24px;background:#e2e2e2;"></div>
<div class="b" style="left:2564px;top:93px;width:2px;height:24px;background:#e2e2e2;"></div>
<div class="b" style="left:2758px;top:93px;width:2px;height:24px;background:#e2e2e2;"></div>
<svg style="position:absolute;left:2850px;top:85px;" width="160" height="40" viewBox="0 0 160 40"><g fill="none" stroke="#6f6f6f" stroke-width="1.9" stroke-linecap="round" stroke-linejoin="round"><path d="M15.3 13.9H33.6M26.6 7.5L33.9 13.9L26.6 20.5"/><path d="M29 26H10.6M17.5 19.6L10.4 26L17.5 32.6"/></g><g fill="none" stroke="#6f6f6f" stroke-width="1.9"><path d="M56 7.8H68M56 13.9H72M56 20H68M56 26H72M56 32.1H72"/><rect x="77" y="7.9" width="14.1" height="24.1"/><rect x="80.9" y="11.9" width="6.2" height="16.1"/></g><g fill="none" stroke="#6f6f6f" stroke-width="2"><rect x="131.2" y="8" width="23.7" height="24" rx="4.6"/><path d="M139.1 8V32"/><path d="M142.5 20H151.7M147.1 15.4V24.6" stroke-width="1.9"/></g></svg>
<div class="b" style="left:2960px;top:93px;width:2px;height:24px;background:#e0e0e0;"></div>
<div class="b" style="left:546px;top:188px;width:2478px;height:2px;background:#e4e4e4;"></div>
<svg style="position:absolute;left:562.6px;top:147.6px;" width="26.2" height="26.2" viewBox="0 0 29 29"><rect x="0" y="0" width="29" height="29" rx="6.5" fill="#2d82f7"/><rect x="2.55" y="2.55" width="23.9" height="23.9" rx="4.3" fill="none" stroke="#fff" stroke-width="1.3"/><g fill="none" stroke="#fff" stroke-width="2" stroke-linecap="round"><path d="M15.5 7.0L9.9 16.8"/><path d="M13.6 7.0L21.0 20.0"/><path d="M6.0 17.1H15.6"/><path d="M19 17.1H23"/><path d="M8.3 19.6L7.7 20.6"/></g></svg>
<div class="t" style="left:601px;top:146.08px;height:31px;line-height:31px;font-size:22px;color:#2f2f2f;letter-spacing:0.71px;">TodoList</div>
<svg style="position:absolute;left:699.2px;top:150.4px;" width="9.6" height="22.4" viewBox="0 0 9.6 22.4"><path d="M3.05 3.05L6.55 11.2L3.05 19.349999999999998" fill="none" stroke="#8c8c8c" stroke-width="2.1" stroke-linecap="round" stroke-linejoin="round"/></svg>
<svg style="position:absolute;left:724.6px;top:150.2px;" width="25.4" height="20" viewBox="0 0 29 23"><path d="M0 7.4V2.8Q0 0 2.8 0H8.6Q10.2 0 11.4 1L12.6 2Q13.4 2.6 14.6 2.6H26.2Q29 2.6 29 5.4V7.4Z" fill="#94989d"/><path d="M0 9.9H29V20.2Q29 23 26.2 23H2.8Q0 23 0 20.2Z" fill="#94989d"/></svg>
<div class="t" style="left:763px;top:146.08px;height:31px;line-height:31px;font-size:22px;color:#2f2f2f;letter-spacing:0.71px;">TodoList</div>
<svg style="position:absolute;left:861.3px;top:150.4px;" width="9.6" height="22.4" viewBox="0 0 9.6 22.4"><path d="M3.05 3.05L6.55 11.2L3.05 19.349999999999998" fill="none" stroke="#8c8c8c" stroke-width="2.1" stroke-linecap="round" stroke-linejoin="round"/></svg>
<svg style="position:absolute;left:887.1px;top:150.2px;" width="25.4" height="20" viewBox="0 0 29 23"><path d="M0 7.4V2.8Q0 0 2.8 0H8.6Q10.2 0 11.4 1L12.6 2Q13.4 2.6 14.6 2.6H26.2Q29 2.6 29 5.4V7.4Z" fill="#94989d"/><path d="M0 9.9H29V20.2Q29 23 26.2 23H2.8Q0 23 0 20.2Z" fill="#94989d"/></svg>
<div class="t" style="left:924.8px;top:146.08px;height:31px;line-height:31px;font-size:22px;color:#2f2f2f;letter-spacing:0.34px;">Views</div>
<svg style="position:absolute;left:995px;top:150.4px;" width="9.6" height="22.4" viewBox="0 0 9.6 22.4"><path d="M3.05 3.05L6.55 11.2L3.05 19.349999999999998" fill="none" stroke="#8c8c8c" stroke-width="2.1" stroke-linecap="round" stroke-linejoin="round"/></svg>
<svg preserveAspectRatio="none" style="position:absolute;left:1021.6px;top:150.1px;overflow:visible;" width="24.4" height="20.8" viewBox="2.41 3.41 18.12 16.21"><defs><linearGradient id="sg14" x1="0" y1="0" x2="0" y2="1"><stop offset="0" stop-color="#f58b55"/><stop offset="1" stop-color="#ef7248"/></linearGradient></defs><path d="M13.543 3.41c4.114 2.47 6.545 7.162 5.549 11.131-.024.093-.05.181-.076.272l.002.001c2.062 2.538 1.5 5.258 1.236 4.745-1.072-2.086-3.066-1.568-4.088-1.043a6.803 6.803 0 0 1-.281.158l-.02.012-.002.002c-2.115 1.123-4.957 1.205-7.812-.022a12.568 12.568 0 0 1-5.64-4.838c.649.48 1.35.902 2.097 1.252 3.019 1.414 6.051 1.311 8.197-.002C9.651 12.73 7.101 9.67 5.146 7.191a10.628 10.628 0 0 1-1.005-1.384c2.34 2.142 6.038 4.83 7.365 5.576C8.69 8.408 6.208 4.743 6.324 4.86c4.436 4.47 8.528 6.996 8.528 6.996.154.085.27.154.36.213.085-.215.16-.437.224-.668.708-2.588-.09-5.548-1.893-7.992z" fill="url(#sg14)"/></svg>
<div class="t" style="left:1058px;top:146.08px;height:31px;line-height:31px;font-size:22px;color:#2f2f2f;letter-spacing:0.53px;">ItemView</div>
<svg style="position:absolute;left:1162.8px;top:150.4px;" width="9.6" height="22.4" viewBox="0 0 9.6 22.4"><path d="M3.05 3.05L6.55 11.2L3.05 19.349999999999998" fill="none" stroke="#8c8c8c" stroke-width="2.1" stroke-linecap="round" stroke-linejoin="round"/></svg>
<div class="t" style="left:1186.6px;top:146.08px;height:31px;line-height:31px;font-size:22px;color:#2f2f2f;letter-spacing:0.61px;">No Selection</div>
<div class="b" style="left:640.4px;top:194.5px;width:13.6px;height:223px;background:#e8e8e8;border-radius:6.8px;"></div>
<div class="b" style="left:640.2px;top:572.3px;width:13.8px;height:37.4px;background:#afafaf;"></div>
<svg style="position:absolute;left:642.2px;top:584px;" width="10" height="14" viewBox="0 0 10 14"><path d="M2.4 2.2L7.4 7L2.4 11.8" fill="none" stroke="#f4f4f4" stroke-width="2.4" stroke-linecap="round" stroke-linejoin="round"/></svg>
<div class="b" style="left:640.4px;top:650px;width:13.6px;height:413px;background:#e8e8e8;border-radius:6.8px;"></div>
<div class="b" style="left:640.4px;top:801.5px;width:13.6px;height:149px;background:#d2d2d2;border-radius:6.8px;"></div>
<div class="b" style="left:546px;top:458.3px;width:10px;height:37.6px;background:#eff4fe;"></div>
<div class="b" style="left:554px;top:458.2px;width:1600px;height:37.8px;background:#e8f0fe;border:2px solid #3a7bf2;border-radius:8px 0 0 8px;box-sizing:border-box;"></div>
<div class="b" style="left:554px;top:458.2px;width:14px;height:37.8px;background:#a9c7fa;border:2px solid #3a7bf2;border-radius:7.5px 6.5px 6.5px 7.5px;box-sizing:border-box;"></div>
<div class="b" style="left:555.6px;top:648.5px;width:10.4px;height:417px;background:#aac6fa;border:2px solid #3b7af0;border-radius:5px;box-sizing:border-box;"></div>
<div class="ln" style="top:194.5px;">1</div>
<div class="code" style="top:193.2px;"><span class="c">//</span></div>
<div class="ln" style="top:232.5px;">2</div>
<div class="code" style="top:231.2px;"><span class="c">//  ItemView.swift</span></div>
<div class="ln" style="top:270.5px;">3</div>
<div class="code" style="top:269.2px;"><span class="c">//  TodoList</span></div>
<div class="ln" style="top:308.5px;">4</div>
<div class="code" style="top:307.2px;"><span class="c">//</span></div>
<div class="ln" style="top:346.5px;">5</div>
<div class="code" style="top:345.2px;"><span class="c">//  Created by Russell Gordon on 2024-04-08.</span></div>
<div class="ln" style="top:384.5px;">6</div>
<div class="code" style="top:383.2px;"><span class="c">//</span></div>
<div class="ln" style="top:422.5px;">7</div>
<div class="ln" style="top:460.5px;color:#262626;">8</div>
<div class="code" style="top:459.2px;"><span class="k">import</span> SwiftData</div>
<div class="ln" style="top:498.5px;">9</div>
<div class="code" style="top:497.2px;"><span class="k">import</span> SwiftUI</div>
<div class="ln" style="top:536.5px;">10</div>
<div class="ln" style="top:574.5px;">11</div>
<div class="code" style="top:573.2px;"><span class="k">struct</span> <span class="td">ItemView</span>: <span class="ty">View</span> {<span class="dots">•••</span>}</div>
<div class="ln" style="top:612.5px;">29</div>
<div class="ln" style="top:650.5px;">30</div>
<div class="code" style="top:649.2px;"><span class="fn">#Preview</span> {</div>
<div class="ln" style="top:688.5px;">31</div>
<div class="ln" style="top:726.5px;">32</div>
<div class="code" style="top:725.2px;">    <span class="k">let</span> container = <span class="pt">TodoItem</span>.<span class="pp">preview</span></div>
<div class="ln" style="top:764.5px;">33</div>
<div class="ln" style="top:802.5px;">34</div>
<div class="code" style="top:801.2px;">    <span class="k">return</span> <span class="ty">List</span> {</div>
<div class="ln" style="top:840.5px;">35</div>
<div class="code" style="top:839.2px;">        <span class="pt">ItemView</span>(<span class="pp">currentItem</span>: <span class="pt">TodoItem</span>.<span class="pp">someItem</span>)</div>
<div class="ln" style="top:878.5px;">36</div>
<div class="code" style="top:877.2px;">        <span class="pt">ItemView</span>(<span class="pp">currentItem</span>: <span class="pt">TodoItem</span>.<span class="pp">anotherItem</span>)</div>
<div class="ln" style="top:916.5px;">37</div>
<div class="code" style="top:915.2px;">    }</div>
<div class="ln" style="top:954.5px;">38</div>
<div class="code" style="top:953.2px;">    .<span class="fn">modelContainer</span>(container)</div>
<div class="ln" style="top:992.5px;">39</div>
<div class="ln" style="top:1030.5px;">40</div>
<div class="code" style="top:1029.2px;">}</div>
<div class="ln" style="top:1068.5px;">41</div>
<div class="b" style="left:546px;top:1832px;width:2478px;height:2px;background:#e4e4e4;"></div>
<svg style="position:absolute;left:568px;top:1851px;" width="32" height="20" viewBox="0 0 32 20"><path d="M4.2 1H22.8Q24.2 1 25.2 2.1L29.4 7.2Q30.4 8.4 30.4 10Q30.4 11.6 29.4 12.8L25.2 17.9Q24.2 19 22.8 19H4.2Q1 19 1 15.8V4.2Q1 1 4.2 1Z" fill="#3478f6"/></svg>
<div class="t" style="left:2790.5px;top:1845.49px;height:32px;line-height:32px;font-size:22.6px;color:#7c7c7c;letter-spacing:0.37px;-webkit-text-stroke:0.35px #7c7c7c;">Line: 8  Col: 1</div>
<div class="b" style="left:2954.4px;top:1849px;width:2px;height:24px;background:#e0e0e0;"></div>
<svg style="position:absolute;left:2972px;top:1847px;" width="28" height="28" viewBox="0 0 28 28"><rect x="2.4" y="2.6" width="23.2" height="22.6" rx="5" fill="none" stroke="#6f6f6f" stroke-width="2.2"/><rect x="6" y="17.4" width="16" height="4.6" rx="1.4" fill="#6f6f6f"/></svg>
<div class="b" style="left:2150px;top:190px;width:874px;height:1642px;background:#f2f2f2;"></div>
<div class="b" style="left:2150px;top:190px;width:2px;height:1642px;background:#e2e2e2;"></div>
<div class="b" style="left:2176px;top:214px;width:63px;height:52px;background:#fff;border-radius:12.5px;box-shadow:0 0 0 0.5px rgba(0,0,0,0.05),0 1px 5px rgba(0,0,0,0.16);"></div>
<div class="b" style="left:2259px;top:214px;width:164px;height:52px;background:#cfdffc;border-radius:12.5px;box-shadow:0 0 0 0.5px rgba(0,0,0,0.05),0 1px 5px rgba(0,0,0,0.16);"></div>
<svg style="position:absolute;left:2194px;top:224px;" width="28" height="32" viewBox="0 0 28 32"><g fill="none" stroke="#3e3e3e" stroke-width="2.1" stroke-linecap="round" stroke-linejoin="round"><path d="M5.4 2H20.4"/><path d="M8.8 2.4L7.9 12.4Q3.4 14.6 3.9 20.3H21.9Q22.4 14.6 17.9 12.4L17 2.4"/><path d="M12.9 20.6V29.6"/></g></svg>
<svg style="position:absolute;left:2275px;top:225px;" width="28" height="28" viewBox="0 0 28 28"><g fill="none" stroke="#3478f6" stroke-linecap="round"><rect x="3.8" y="9" width="18.4" height="15.8" rx="3.4" stroke-width="2"/><path d="M4.6 5.4H21.4M7 2.6H19" stroke-width="1.7"/></g></svg>
<div class="t" style="left:2311.6px;top:224.49px;height:32px;line-height:32px;font-size:22.6px;color:#3478f6;letter-spacing:0.18px;">ItemView</div>
<div class="b" style="left:2262.6px;top:586px;width:10px;height:48px;background:#1f1f1f;border-radius:2.5px;"></div>
<div class="b" style="left:2262.6px;top:678.5px;width:10px;height:92.5px;background:#1f1f1f;border-radius:2.5px;"></div>
<div class="b" style="left:2262.6px;top:796px;width:10px;height:93px;background:#1f1f1f;border-radius:2.5px;"></div>
<div class="b" style="left:2904px;top:739px;width:8.4px;height:149.5px;background:#1f1f1f;border-radius:2.5px;"></div>
<svg style="position:absolute;left:2260px;top:340px;" width="660" height="1345" viewBox="0 0 660 1345"><path d="M125.00 9.00L532.00 9.00C549.83 9.00 564.42 9.89 580.96 16.57A104 104 0 0 1 638.43 74.04C645.11 90.58 646.00 105.17 646.00 123.00L646.00 1219.00C646.00 1236.83 645.11 1251.42 638.43 1267.96A104 104 0 0 1 580.96 1325.43C564.42 1332.11 549.83 1333.00 532.00 1333.00L125.00 1333.00C107.17 1333.00 92.58 1332.11 76.04 1325.43A104 104 0 0 1 18.57 1267.96C11.89 1251.42 11.00 1236.83 11.00 1219.00L11.00 123.00C11.00 105.17 11.89 90.58 18.57 74.04A104 104 0 0 1 76.04 16.57C92.58 9.89 107.17 9.00 125.00 9.00Z" fill="#2b2b2b" stroke="rgba(60,60,60,0.55)" stroke-width="1"/><path d="M125.00 17.00L532.00 17.00C548.63 17.00 562.23 17.80 577.65 24.03A96.5 96.5 0 0 1 630.97 77.35C637.20 92.77 638.00 106.37 638.00 123.00L638.00 1219.00C638.00 1235.63 637.20 1249.23 630.97 1264.65A96.5 96.5 0 0 1 577.65 1317.97C562.23 1324.20 548.63 1325.00 532.00 1325.00L125.00 1325.00C108.37 1325.00 94.77 1324.20 79.35 1317.97A96.5 96.5 0 0 1 26.03 1264.65C19.80 1249.23 19.00 1235.63 19.00 1219.00L19.00 123.00C19.00 106.37 19.80 92.77 26.03 77.35A96.5 96.5 0 0 1 79.35 24.03C94.77 17.80 108.37 17.00 125.00 17.00Z" fill="#000"/><path d="M126.50 31.50L530.50 31.50C545.23 31.50 557.31 32.10 570.97 37.62A84 84 0 0 1 617.38 84.03C622.90 97.69 623.50 109.77 623.50 124.50L623.50 1217.00C623.50 1231.73 622.90 1243.81 617.38 1257.47A84 84 0 0 1 570.97 1303.88C557.31 1309.40 545.23 1310.00 530.50 1310.00L126.50 1310.00C111.77 1310.00 99.69 1309.40 86.03 1303.88A84 84 0 0 1 39.62 1257.47C34.10 1243.81 33.50 1231.73 33.50 1217.00L33.50 124.50C33.50 109.77 34.10 97.69 39.62 84.03A84 84 0 0 1 86.03 37.62C99.69 32.10 111.77 31.50 126.50 31.50Z" fill="#f2f2f7"/></svg>
<div class="b" style="left:2271px;top:487px;width:8px;height:7px;background:#222;"></div>
<div class="b" style="left:2898px;top:487px;width:8px;height:7px;background:#222;"></div>
<div class="b" style="left:2271px;top:1529px;width:8px;height:8px;background:#222;"></div>
<div class="b" style="left:2898px;top:1529px;width:8px;height:8px;background:#222;"></div>
<div class="b" style="left:2765px;top:349px;width:8px;height:8px;background:#222;"></div>
<div class="b" style="left:2405px;top:1665px;width:8px;height:8px;background:#222;"></div>
<div class="b" style="left:2495px;top:389px;width:187px;height:55px;background:#000;border-radius:27.5px;"></div>
<div class="b" style="left:2324px;top:512.5px;width:528.6px;height:132.5px;background:#fff;border-radius:15px;"></div>
<div class="b" style="left:2420px;top:578px;width:432.6px;height:1.2px;background:#dcdcdf;"></div>
<svg style="position:absolute;left:2357px;top:528px;" width="36" height="36" viewBox="0 0 36 36"><circle cx="18" cy="18" r="14.9" fill="none" stroke="#3478f6" stroke-width="2.5"/><path d="M11 18.6L15.8 23.6L24.6 11.6" fill="none" stroke="#3478f6" stroke-width="2.2" stroke-linecap="round" stroke-linejoin="round"/></svg>
<svg style="position:absolute;left:2357px;top:594px;" width="36" height="36" viewBox="0 0 36 36"><circle cx="18" cy="18" r="14.9" fill="none" stroke="#3478f6" stroke-width="2.5"/></svg>
<div class="t" style="left:2420.4px;top:527.09px;height:36px;line-height:36px;font-size:25.4px;color:#111;letter-spacing:-0.37px;">Read a book</div>
<div class="t" style="left:2420.4px;top:593.09px;height:36px;line-height:36px;font-size:25.4px;color:#111;letter-spacing:-0.08px;">Make a sandwich</div>
<div class="b" style="left:2176px;top:1756px;width:163px;height:52px;background:#fff;border-radius:12.5px;box-shadow:0 0 0 0.5px rgba(0,0,0,0.05),0 1px 5px rgba(0,0,0,0.16);"></div>
<div class="b" style="left:2359px;top:1756px;width:63px;height:52px;background:#fff;border-radius:12.5px;box-shadow:0 0 0 0.5px rgba(0,0,0,0.05),0 1px 5px rgba(0,0,0,0.16);"></div>
<div class="b" style="left:2442px;top:1756px;width:54px;height:52px;background:#fff;border-radius:12.5px;box-shadow:0 0 0 0.5px rgba(0,0,0,0.05),0 1px 5px rgba(0,0,0,0.16);"></div>
<div class="b" style="left:2792px;top:1756px;width:208px;height:52px;background:#fff;border-radius:12.5px;box-shadow:0 0 0 0.5px rgba(0,0,0,0.05),0 1px 5px rgba(0,0,0,0.16);"></div>
<svg style="position:absolute;left:2193.8px;top:1769px;" width="26" height="26" viewBox="0 0 26 26"><circle cx="13" cy="13" r="13" fill="#3478f6"/><path d="M9.6 7.4Q9.6 6.2 10.7 6.8L19.4 12.2Q20.4 13 19.4 13.8L10.7 19.2Q9.6 19.8 9.6 18.6Z" fill="#fff"/></svg>
<svg style="position:absolute;left:2240px;top:1769px;" width="28" height="27" viewBox="0 0 28 27"><rect x="3.5" y="2.6" width="20.7" height="20.5" rx="3.2" fill="none" stroke="#4a4a4a" stroke-width="2.6"/><path d="M10.4 6.6V19L13.6 16.2L15.8 21L17.8 20.2L15.8 15.4H19.8Z" fill="#4a4a4a"/></svg>
<svg style="position:absolute;left:2295px;top:1771.6px;" width="27" height="22" viewBox="0 0 27 22"><rect x="1.80" y="1.20" width="4.4" height="6.9" rx="0.8" fill="none" stroke="#555" stroke-width="1.7"/><rect x="10.35" y="1.20" width="4.4" height="6.9" rx="0.8" fill="none" stroke="#555" stroke-width="1.7"/><rect x="18.90" y="1.20" width="4.4" height="6.9" rx="0.8" fill="none" stroke="#555" stroke-width="1.7"/><rect x="1.80" y="12.70" width="4.4" height="6.9" rx="0.8" fill="none" stroke="#555" stroke-width="1.7"/><rect x="10.35" y="12.70" width="4.4" height="6.9" rx="0.8" fill="none" stroke="#555" stroke-width="1.7"/><rect x="18.90" y="12.70" width="4.4" height="6.9" rx="0.8" fill="none" stroke="#555" stroke-width="1.7"/></svg>
<svg style="position:absolute;left:2376px;top:1769px;" width="29" height="27" viewBox="0 0 29 27"><rect x="3" y="2.3" width="22.6" height="9.6" rx="4.8" fill="none" stroke="#4a4a4a" stroke-width="2"/><circle cx="8" cy="7.1" r="2.7" fill="#4a4a4a"/><rect x="2" y="14.6" width="24.6" height="11.2" rx="5.6" fill="#4a4a4a"/><circle cx="20.8" cy="20.2" r="3.1" fill="#fff"/></svg>
<svg style="position:absolute;left:2460px;top:1769px;" width="18" height="27" viewBox="0 0 18 27"><rect x="3" y="2.9" width="11.8" height="20.6" rx="2.6" fill="#d9d9d9" stroke="#555" stroke-width="2"/><path d="M7.2 5.2H10.6" stroke="#555" stroke-width="1.4" stroke-linecap="round"/><path d="M6.2 21.4H11.6" stroke="#555" stroke-width="1.1" stroke-linecap="round"/></svg>
<svg style="position:absolute;left:2810.6px;top:1768.6px;" width="27" height="28" viewBox="0 0 27 28"><circle cx="10.8" cy="11" r="9.1" fill="none" stroke="#484848" stroke-width="2.8"/><path d="M17.6 17.8L23.6 23.8" stroke="#484848" stroke-width="3.5" stroke-linecap="round"/><path d="M7 11H14.6" stroke="#4a4a4a" stroke-width="2" stroke-linecap="round"/></svg>
<svg style="position:absolute;left:2858.6px;top:1768.6px;" width="27" height="28" viewBox="0 0 27 28"><circle cx="10.8" cy="11" r="9.1" fill="none" stroke="#484848" stroke-width="2.8"/><path d="M17.6 17.8L23.6 23.8" stroke="#484848" stroke-width="3.5" stroke-linecap="round"/><path d="M9.4 8.6L11.4 7.2V15" fill="none" stroke="#4a4a4a" stroke-width="1.8" stroke-linecap="round" stroke-linejoin="round"/></svg>
<svg style="position:absolute;left:2906.6px;top:1768.6px;" width="27" height="28" viewBox="0 0 27 28"><circle cx="10.8" cy="11" r="9.1" fill="none" stroke="#484848" stroke-width="2.8"/><path d="M17.6 17.8L23.6 23.8" stroke="#484848" stroke-width="3.5" stroke-linecap="round"/><rect x="7.4" y="7.6" width="6.8" height="6.8" rx="1.4" fill="none" stroke="#4a4a4a" stroke-width="1.8"/></svg>
<svg style="position:absolute;left:2954.6px;top:1768.6px;" width="27" height="28" viewBox="0 0 27 28"><circle cx="10.8" cy="11" r="9.1" fill="none" stroke="#484848" stroke-width="2.8"/><path d="M17.6 17.8L23.6 23.8" stroke="#484848" stroke-width="3.5" stroke-linecap="round"/><path d="M7 11H14.6M10.8 7.2V14.8" stroke="#4a4a4a" stroke-width="2" stroke-linecap="round"/></svg>
</div></body></html>
